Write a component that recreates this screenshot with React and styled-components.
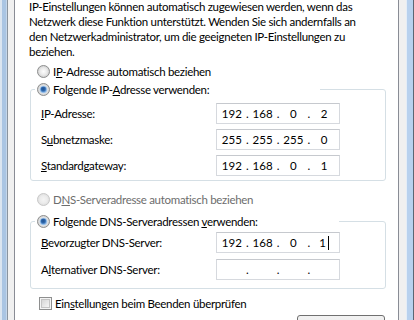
import React from 'react';
import styled, { createGlobalStyle } from 'styled-components';

const GlobalStyle = createGlobalStyle`
  html, body {
    margin: 0;
    padding: 0;
    background: #f0f0f0;
  }
  body {
    font-family: Lato, 'Liberation Sans', sans-serif;
    font-size: 11.5px;
    letter-spacing: -0.3px;
    color: #000;
  }
`;

const Window = styled.div`
  display: flex;
  width: 414px;
  height: 320px;
  overflow: hidden;
`;

const LeftFrame = styled.div`
  flex: 0 0 7px;
  background: linear-gradient(90deg, #dbe5f0 0 2px, #aac5e3 2px 6px, #c4d6ea 6px);
  border-right: 1px solid #8a949f;
`;

const RightFrame = styled.div`
  flex: 0 0 6px;
  background: #b8d1ee;
  border-left: 1px solid #e4edf7;
  border-right: 1px solid #5b6673;
`;

const Dialog = styled.div`
  flex: 1;
  background: #f0f0f0;
  padding: 0 7px 0 6px;
`;

const TabPanel = styled.div`
  background: #fff;
  border-left: 1px solid #898c95;
  border-right: 1px solid #898c95;
  min-height: 360px;
  padding: 0 12px 0 15px;
`;

const Intro = styled.p`
  margin: -1px 0 0 -1px;
  line-height: 15px;
  white-space: nowrap;
`;

const OptionRow = styled.div`
  display: flex;
  align-items: center;
  gap: 3px;
  height: 16px;
  margin-top: ${(p) => p.$top || 0}px;
  margin-left: ${(p) => p.$left || 7}px;
  color: ${(p) => (p.$disabled ? '#6d6d6d' : '#000')};
  white-space: nowrap;
`;

const GroupBox = styled.fieldset`
  margin: ${(p) => p.$top || 0}px 0 0;
  padding: 0;
  border: 1px solid #d5dfe5;
  border-radius: 3px;
  min-width: 0;
`;

const Legend = styled.legend`
  display: flex;
  align-items: center;
  gap: 3px;
  box-sizing: border-box;
  width: ${(p) => p.$width}px;
  height: 16px;
  margin-left: 4px;
  padding: 0 2px;
  white-space: nowrap;
`;

const Rows = styled.div`
  display: flex;
  flex-direction: column;
  gap: ${(p) => p.$gap || 5}px;
  padding: ${(p) => p.$pt}px 0 ${(p) => p.$pb}px 10px;
`;

const FieldRow = styled.div`
  display: grid;
  grid-template-columns: 175px 124px;
  align-items: center;
  height: 21px;
  white-space: nowrap;
`;

const IpBox = styled.div`
  display: flex;
  align-items: center;
  box-sizing: border-box;
  height: 21px;
  padding: 0 1px;
  background: #fff;
  border: 1px solid #d6d9de;
  border-top-color: #c6c9ce;
  line-height: 19px;
  letter-spacing: 0;
`;

const Octet = styled.span`
  flex: 1;
  text-align: center;
`;

const Dot = styled.span`
  width: 3px;
  text-align: center;
`;

const Caret = styled.span`
  display: inline-block;
  width: 1px;
  height: 14px;
  margin-left: 2px;
  vertical-align: -3px;
  background: #000;
`;

const Footer = styled.div`
  display: flex;
  flex-direction: column;
  align-items: flex-end;
`;

const Button = styled.button`
  width: 88px;
  height: 23px;
  margin: 4px 1px 0 0;
  border: 1px solid #707070;
  border-radius: 3px;
  background: linear-gradient(#f2f2f2 0%, #ebebeb 49%, #dddddd 50%, #cfcfcf 100%);
  font: inherit;
  color: #000;
`;

const Key = styled.span`
  text-decoration: underline;
  text-underline-offset: 1px;
`;

function Radio({ checked, disabled }) {
  const id = disabled ? 'rd' : 'rn';
  return (
    <svg width="13" height="13" viewBox="0 0 13 13" style={{ flex: '0 0 13px' }}>
      <defs>
        <radialGradient id={`${id}-fill`} cx="50%" cy="50%" r="50%">
          <stop offset="0%" stopColor={disabled ? '#f4f4f4' : '#fdfdfd'} />
          <stop offset="60%" stopColor={disabled ? '#ececec' : '#e9e9e9'} />
          <stop offset="100%" stopColor={disabled ? '#dedede' : '#cdcdcd'} />
        </radialGradient>
        <radialGradient id="r-dot" cx="45%" cy="40%" r="60%">
          <stop offset="0%" stopColor="#1e4f8f" />
          <stop offset="55%" stopColor="#2f68ad" />
          <stop offset="100%" stopColor="#7fb1e6" />
        </radialGradient>
      </defs>
      <circle
        cx="6.5"
        cy="6.5"
        r="6"
        fill={`url(#${id}-fill)`}
        stroke={disabled ? '#c8c8c8' : '#8e8f8f'}
      />
      {checked && (
        <>
          <circle cx="6.5" cy="6.5" r="3.8" fill="#a8c8ea" />
          <circle cx="6.5" cy="6.5" r="3" fill="url(#r-dot)" />
        </>
      )}
    </svg>
  );
}

function Checkbox() {
  return (
    <svg width="13" height="13" viewBox="0 0 13 13" style={{ flex: '0 0 13px' }}>
      <defs>
        <linearGradient id="cb-fill" x1="0" y1="0" x2="1" y2="1">
          <stop offset="0%" stopColor="#d4d4d4" />
          <stop offset="100%" stopColor="#f7f7f7" />
        </linearGradient>
      </defs>
      <rect x="0.5" y="0.5" width="12" height="12" fill="#f4f4f4" stroke="#8e8f8f" />
      <rect x="2.5" y="2.5" width="8" height="8" fill="url(#cb-fill)" stroke="#c4c4c4" />
    </svg>
  );
}

function IpField({ parts, caret }) {
  const octets = parts || ['', '', '', ''];
  return (
    <IpBox>
      {octets.map((o, i) => (
        <React.Fragment key={i}>
          {i > 0 && <Dot>.</Dot>}
          <Octet>
            {o}
            {caret && i === 3 && <Caret />}
          </Octet>
        </React.Fragment>
      ))}
    </IpBox>
  );
}

export default function App() {
  return (
    <>
      <GlobalStyle />
      <Window>
        <LeftFrame />
        <Dialog>
          <TabPanel>
            <Intro>
              IP-Einstellungen können automatisch zugewiesen werden, wenn das
              <br />
              Netzwerk diese Funktion unterstützt. Wenden Sie sich andernfalls an
              <br />
              den Netzwerkadministrator, um die geeigneten IP-Einstellungen zu
              <br />
              beziehen.
            </Intro>

            <OptionRow $top={4}>
              <Radio />
              <span>
                I<Key>P</Key>-Adresse automatisch beziehen
              </span>
            </OptionRow>

            <GroupBox $top={2}>
              <Legend $width={285}>
                <Radio checked />
                <span>
                  Folgende IP-<Key>A</Key>dresse verwenden:
                </span>
              </Legend>
              <Rows $pt={6} $pb={4}>
                <FieldRow>
                  <span>
                    <Key>I</Key>P-Adresse:
                  </span>
                  <IpField parts={['192', '168', '0', '2']} />
                </FieldRow>
                <FieldRow>
                  <span>
                    S<Key>u</Key>bnetzmaske:
                  </span>
                  <IpField parts={['255', '255', '255', '0']} />
                </FieldRow>
                <FieldRow>
                  <span>
                    <Key>S</Key>tandardgateway:
                  </span>
                  <IpField parts={['192', '168', '0', '1']} />
                </FieldRow>
              </Rows>
            </GroupBox>

            <OptionRow $top={10} $disabled>
              <Radio disabled />
              <span>
                D<Key>N</Key>S-Serveradresse automatisch beziehen
              </span>
            </OptionRow>

            <GroupBox $top={6}>
              <Legend $width={304}>
                <Radio checked />
                <span>
                  Folgende DNS-Serveradressen <Key>v</Key>erwenden:
                </span>
              </Legend>
              <Rows $pt={3} $pb={8} $gap={6}>
                <FieldRow>
                  <span>
                    <Key>B</Key>evorzugter DNS-Server:
                  </span>
                  <IpField parts={['192', '168', '0', '1']} caret />
                </FieldRow>
                <FieldRow>
                  <span>
                    A<Key>l</Key>ternativer DNS-Server:
                  </span>
                  <IpField />
                </FieldRow>
              </Rows>
            </GroupBox>

            <Footer>
              <OptionRow $top={6} $left={9} style={{ alignSelf: 'stretch' }}>
                <Checkbox />
                <span>
                  Ein<Key>s</Key>tellungen beim Beenden überprüfen
                </span>
              </OptionRow>
              <Button aria-label="Erweitert..." />
            </Footer>
          </TabPanel>
        </Dialog>
        <RightFrame />
      </Window>
    </>
  );
}
